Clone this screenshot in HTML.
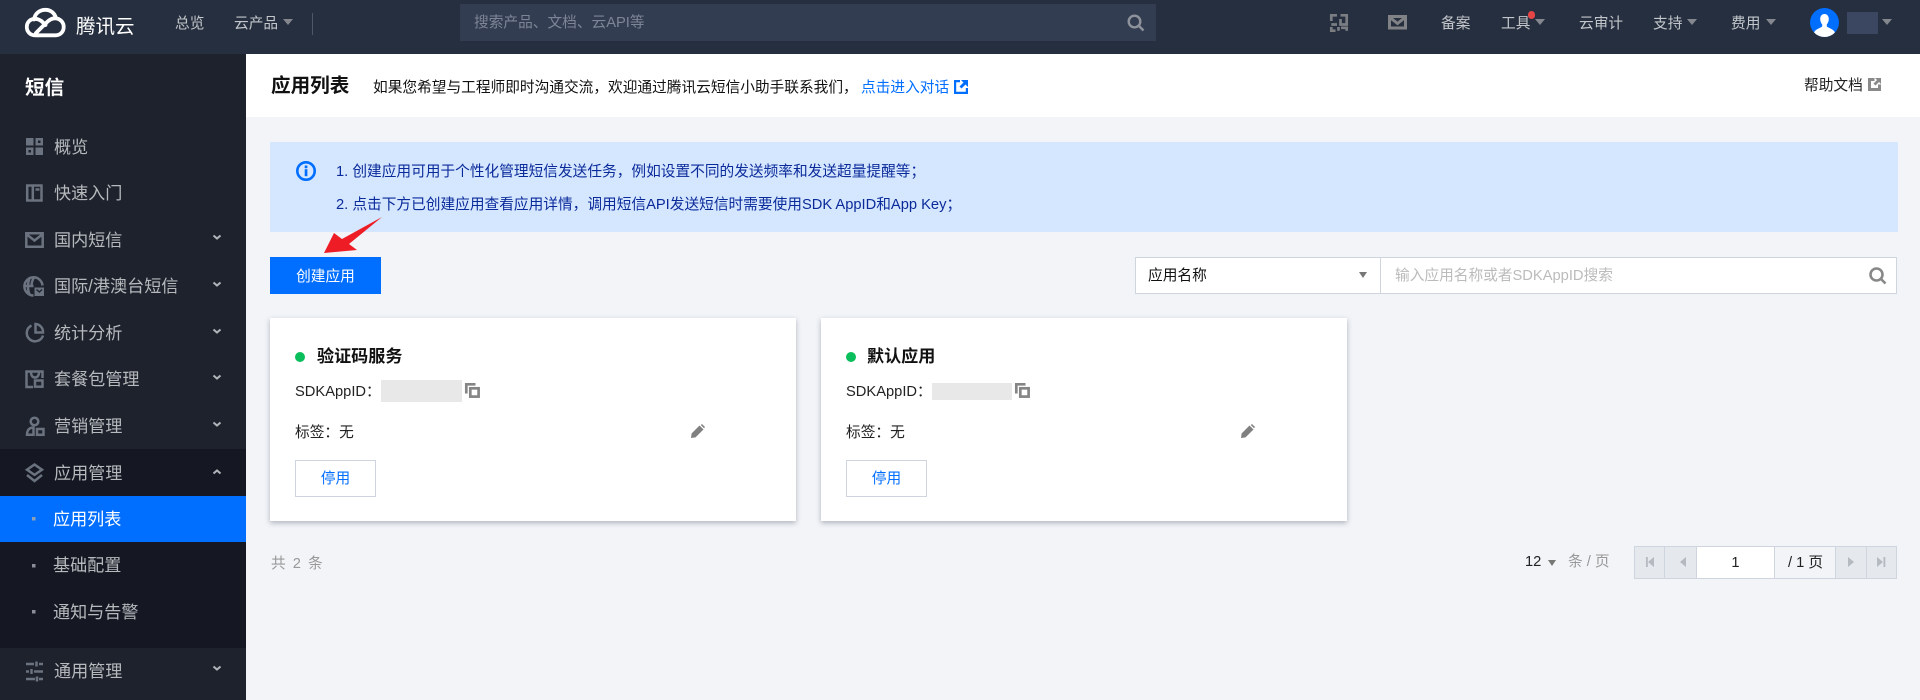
<!DOCTYPE html>
<html lang="zh"><head><meta charset="utf-8"><title>应用列表</title>
<style>
*{box-sizing:border-box}
html,body{margin:0;padding:0;width:1920px;height:700px;overflow:hidden;background:#f2f4f8;font-family:"Liberation Sans","Noto Sans CJK SC",sans-serif;font-size:14.7px;color:#000}
.a{position:absolute}
.t{position:absolute;white-space:nowrap;line-height:20px;height:20px}
.n{color:#c3c7cb}
.s{color:#b6babd;font-size:17.1px;line-height:24px;height:24px}
.tri{position:absolute;width:0;height:0;border-left:5px solid transparent;border-right:5px solid transparent;border-top:6.5px solid #84878d}
svg{position:absolute;overflow:visible}
.ic{fill:none;stroke:#6a737f;stroke-width:2.5}
.card{position:absolute;top:318px;width:526px;height:203px;background:#fff;box-shadow:0 2px 5px rgba(54,58,80,.35)}
.pb{position:absolute;top:546px;height:32.5px;background:#e5e8ed;border:1.5px solid #cfd5de}
</style></head><body>

<!-- top bar -->
<div class="a" style="left:0;top:0;width:1920px;height:54px;background:#262f3f"></div>
<svg style="left:0;top:0" width="80" height="54" fill="none" stroke="#fff" stroke-width="3.8" stroke-linecap="round" stroke-linejoin="round">
<path d="M34 19.500C35 13 40 9.800 45.500 9.800C50.500 9.800 54.500 13 56 18"/>
<path d="M38 35.300H55.500C60.500 35.300 63.700 31.500 63.700 27C63.700 22 59.800 18.300 55 18.300C51 18.300 48.500 20.500 46 23L36 33"/>
<path d="M38 35.300H35C30 35.300 26.800 31.500 26.800 27C26.800 22 30.500 18.800 35 18.800C38.500 18.800 41 20.500 43 22.500L45.500 25"/>
</svg>
<div class="t" style="left:76px;top:17px;font-size:19.5px;color:#fff">腾讯云</div>
<div class="t n" style="left:175px;top:14px">总览</div>
<div class="t n" style="left:234px;top:14px">云产品</div>
<div class="tri" style="left:283px;top:19px"></div>
<div class="a" style="left:312px;top:13px;width:1px;height:22px;background:#4f5766"></div>
<div class="a" style="left:460px;top:4px;width:696px;height:37px;background:#323d52"></div>
<div class="t" style="left:474px;top:13px;color:#7d8696">搜索产品、文档、云API等</div>
<svg style="left:1127px;top:14px" width="18" height="18" fill="none" stroke="#8d929b" stroke-width="2.4"><circle cx="7.500" cy="7.500" r="5.800"/><path d="M12 12l4.500 4.500"/></svg>

<svg style="left:1330px;top:14px" width="18" height="18" fill="none" stroke="#7a7d82" stroke-width="2.7"><path d="M7 1.300H1.300V7M10.500 1.300H16.700V10.500H10.500V5M1.300 10.500H7M1.300 13V16.700H5.500M8.500 13V16.700M11 13.800H16.700V16.700"/></svg>
<svg style="left:1388px;top:15px" width="20" height="15" fill="none" stroke="#808286" stroke-width="3"><rect x="1.500" y="1.500" width="16" height="11.500"/><path d="M2 2.500l7.500 6 7.500-6"/></svg>
<div class="t n" style="left:1441px;top:14px">备案</div>
<div class="t n" style="left:1501px;top:14px">工具</div>
<div class="a" style="left:1528px;top:11px;width:7px;height:8px;border-radius:4px;background:#e54545"></div>
<div class="tri" style="left:1535px;top:19px"></div>
<div class="t n" style="left:1579px;top:14px">云审计</div>
<div class="t n" style="left:1653px;top:14px">支持</div>
<div class="tri" style="left:1687px;top:19px"></div>
<div class="t n" style="left:1731px;top:14px">费用</div>
<div class="tri" style="left:1766px;top:19px"></div>
<svg style="left:1810px;top:8px" width="30" height="30"><clipPath id="av"><circle cx="14.500" cy="14.500" r="14.500"/></clipPath><circle cx="14.500" cy="14.500" r="14.500" fill="#006eff"/><path clip-path="url(#av)" d="M14.500 6c2.800 0 4.300 2.300 4.300 5 0 2.300-.9 4.200-2 5.400v2c1 1.500 6 2.300 8 5.600L24 30H5l-.8-6c2-3.300 7-4.100 8-5.600v-2c-1.100-1.200-2-3.100-2-5.400 0-2.700 1.500-5 4.300-5z" fill="#fff"/></svg>
<div class="a" style="left:1847px;top:12px;width:31px;height:22px;background:#3b4761"></div>
<div class="tri" style="left:1882px;top:19px"></div>

<!-- sidebar -->
<div class="a" style="left:0;top:54px;width:246px;height:646px;background:#1e222d"></div>
<div class="a" style="left:0;top:449px;width:246px;height:199px;background:#151823"></div>
<div class="a" style="left:0;top:496px;width:246px;height:46px;background:#006eff"></div>
<div class="t" style="left:25px;top:76px;font-size:19.6px;line-height:24px;height:24px;color:#fff;font-weight:bold">短信</div>

<div class="t s" style="left:54px;top:136px">概览</div>
<div class="t s" style="left:54px;top:182px">快速入门</div>
<div class="t s" style="left:54px;top:229px">国内短信</div>
<div class="t s" style="left:54px;top:275px">国际/港澳台短信</div>
<div class="t s" style="left:54px;top:322px">统计分析</div>
<div class="t s" style="left:54px;top:368px">套餐包管理</div>
<div class="t s" style="left:54px;top:415px">营销管理</div>
<div class="t s" style="left:54px;top:462px">应用管理</div>
<div class="t s" style="left:53px;top:508px;color:#fff">应用列表</div>
<div class="t s" style="left:53px;top:554px">基础配置</div>
<div class="t s" style="left:53px;top:601px">通知与告警</div>
<div class="t s" style="left:54px;top:660px">通用管理</div>

<!-- sidebar icons -->
<svg style="left:0;top:0" width="246" height="700">
<g fill="#6a737f"><rect x="26" y="138" width="7.500" height="7.500"/><rect x="35.500" y="138" width="7.500" height="7.500"/><rect x="26" y="147.500" width="7.500" height="7.500"/><rect x="35.500" y="147.500" width="7.500" height="7.500"/></g>
<rect x="38" y="140.500" width="2.500" height="2.500" fill="#1e222d"/><rect x="28.500" y="150" width="2.500" height="2.500" fill="#1e222d"/>
<g class="ic">
<path d="M27.200 185.500h14.300v15H27.200zM32.800 185.500v15M35.500 189.500h4"/>
<path d="M26.300 233.300h16.400v13.400H26.300zM26.800 234.500l7.700 6 7.700-6"/>
<path d="M33.500 295.500a9 9 0 0 1 0-18.200 9 9 0 0 1 9 8.200M29.500 279c-2 4-2 11 0 15M34 277.500c-2.500 4-2.500 8-2.500 8.500M25.500 286h8"/>
<path d="M31.500 325.500a8.300 8.300 0 1 0 11.500 10"/><path d="M35.500 324a8 8 0 0 1 7.500 8.500h-7.500z"/>
<path d="M33 387H26.500V371.500H42.500V378M31 372c0 4 2 5.500 4 5.500s4-1.500 4-5.500"/><rect x="35" y="380.500" width="7.500" height="6.200"/>
<circle cx="34.500" cy="421.500" r="3.800"/><path d="M33.500 427.500c-4 0-6.500 2.500-6.500 7.300h6.500z"/><rect x="37" y="429" width="6.500" height="5.800"/>
<path d="M34.500 464.500l7.500 5.200-7.500 5.200-7.500-5.200zM27 475l7.500 6 7.500-6"/>
<path d="M26 664h8M39 664h4M26 671.500h3M34 671.500h9M26 679h9M39 679h4"/><path d="M36.500 661.500v5M31.500 669v5M37 676.500v5"/>
</g>
<path d="M34.500 287.500h9.500v8.500h-9.500z" fill="#6a737f"/><path d="M36.500 289.500l2.800 2.500 2.800-2.500" fill="none" stroke="#1e222d" stroke-width="1.300"/>
<g><rect x="32" y="517" width="3.500" height="3.500" fill="#8da0b8"/><rect x="32" y="564" width="3.500" height="3.500" fill="#8a8e96"/><rect x="32" y="610" width="3.500" height="3.500" fill="#8a8e96"/></g>
<g fill="none" stroke="#b0b4b9" stroke-width="2">
<path d="M213.500 235.500l3.500 3 3.500-3M213.500 282.500l3.500 3 3.500-3M213.500 329.500l3.500 3 3.500-3M213.500 375.500l3.500 3 3.500-3M213.500 422.500l3.500 3 3.500-3M213.500 666.500l3.500 3 3.500-3"/>
<path d="M213.500 473.500l3.500-3 3.500 3"/>
</g>
</svg>

<!-- page header -->
<div class="a" style="left:246px;top:54px;width:1674px;height:63px;background:#fff"></div>
<div class="t" style="left:271px;top:74px;font-size:19.6px;line-height:24px;height:24px;font-weight:bold;color:#111">应用列表</div>
<div class="t" style="left:373px;top:78px;color:#111">如果您希望与工程师即时沟通交流，欢迎通过腾讯云短信小助手联系我们，</div>
<div class="t" style="left:861px;top:78px;color:#006eff">点击进入对话</div>
<svg style="left:954px;top:80px" width="14" height="14"><path d="M0 0h6v2.200H2.200v9.600h9.600V8H14v6H0z" fill="#006eff"/><path d="M7 0h7v7l-2.500-2.500-4 4-2-2 4-4z" fill="#006eff"/></svg>
<div class="t" style="left:1804px;top:76px;color:#222">帮助文档</div>
<svg style="left:1868px;top:78px" width="13" height="13"><path d="M0 0h6.500v3H3v7h7V6.500h3V13H0z" fill="#8a8a8a"/><path d="M7 0h6v6l-2-2-3.500 3.500-2-2L9 2z" fill="#8a8a8a"/></svg>

<!-- alert -->
<div class="a" style="left:270px;top:142px;width:1628px;height:90px;background:#d5e7ff"></div>
<svg style="left:296px;top:161px" width="20" height="20" fill="none"><circle cx="10" cy="10" r="8.700" stroke="#006eff" stroke-width="2.600"/><rect x="8.700" y="4.500" width="2.700" height="2.700" fill="#006eff"/><rect x="8.700" y="8.200" width="2.700" height="7" fill="#006eff"/></svg>
<div class="t" style="left:336px;top:162px;color:#0a2a9a">1. 创建应用可用于个性化管理短信发送任务，例如设置不同的发送频率和发送超量提醒等；</div>
<div class="t" style="left:336px;top:195px;color:#0a2a9a">2. 点击下方已创建应用查看应用详情，调用短信API发送短信时需要使用SDK AppID和App Key；</div>
<svg style="left:0;top:0" width="420" height="270"><path d="M382 217L349 244L357 250L324 253L334 233L342 239Z" fill="#ee1c25"/></svg>

<!-- toolbar -->
<div class="a" style="left:270px;top:257px;width:111px;height:37px;background:#006eff"></div>
<div class="t" style="left:270px;top:267px;width:111px;text-align:center;color:#fff">创建应用</div>
<div class="a" style="left:1135px;top:257px;width:246px;height:37px;background:#fff;border:1.500px solid #cfd5de"></div>
<div class="t" style="left:1148px;top:266px;color:#111">应用名称</div>
<div class="tri" style="left:1359px;top:272px;border-left-width:4.500px;border-right-width:4.500px;border-top-color:#777"></div>
<div class="a" style="left:1380px;top:257px;width:517px;height:37px;background:#fff;border:1.500px solid #cfd5de"></div>
<div class="t" style="left:1395px;top:266px;color:#bbb">输入应用名称或者SDKAppID搜索</div>
<svg style="left:1869px;top:267px" width="18" height="18" fill="none" stroke="#888" stroke-width="2.600"><circle cx="7.500" cy="7.500" r="6"/><path d="M12 12l4.500 4.500"/></svg>

<!-- cards -->
<div class="card" style="left:270px"></div>
<div class="card" style="left:821px"></div>

<div class="a" style="left:295px;top:352px;width:10px;height:10px;border-radius:50%;background:#0abf5b"></div>
<div class="t" style="left:317px;top:345px;font-size:17.1px;line-height:24px;height:24px;font-weight:bold;color:#111">验证码服务</div>
<div class="t" style="left:295px;top:382px;color:#222">SDKAppID：</div>
<div class="a" style="left:381px;top:380px;width:81px;height:22px;background:#e8e8e8"></div>
<svg style="left:465px;top:383px" width="15" height="15" fill="none" stroke="#858585" stroke-width="2.700"><rect x="5.300" y="5.300" width="8.300" height="8.300"/><path d="M1.300 10.500V1.300h9.200"/></svg>
<div class="t" style="left:295px;top:423px;color:#222">标签：无</div>
<svg style="left:691px;top:424px" width="14" height="14"><path d="M0 14l.6-4.500L8.500 1.500l4 4L4.500 13.400zM9.800 1L11 0l3 3-1 1.200z" fill="#808080"/></svg>
<div class="a" style="left:295px;top:460px;width:81px;height:37px;border:1.500px solid #cfd5de"></div>
<div class="t" style="left:295px;top:469px;width:81px;text-align:center;color:#006eff">停用</div>

<div class="a" style="left:846px;top:352px;width:10px;height:10px;border-radius:50%;background:#0abf5b"></div>
<div class="t" style="left:867px;top:345px;font-size:17.1px;line-height:24px;height:24px;font-weight:bold;color:#111">默认应用</div>
<div class="t" style="left:846px;top:382px;color:#222">SDKAppID：</div>
<div class="a" style="left:932px;top:383px;width:80px;height:17px;background:#e8e8e8"></div>
<svg style="left:1015px;top:383px" width="15" height="15" fill="none" stroke="#858585" stroke-width="2.700"><rect x="5.300" y="5.300" width="8.300" height="8.300"/><path d="M1.300 10.500V1.300h9.200"/></svg>
<div class="t" style="left:846px;top:423px;color:#222">标签：无</div>
<svg style="left:1241px;top:424px" width="14" height="14"><path d="M0 14l.6-4.500L8.500 1.500l4 4L4.500 13.400zM9.800 1L11 0l3 3-1 1.200z" fill="#808080"/></svg>
<div class="a" style="left:846px;top:460px;width:81px;height:37px;border:1.500px solid #cfd5de"></div>
<div class="t" style="left:846px;top:469px;width:81px;text-align:center;color:#006eff">停用</div>

<!-- footer -->
<div class="t" style="left:271px;top:554px;color:#999;letter-spacing:1.500px">共 2 条</div>
<div class="t" style="left:1525px;top:552px;color:#222">12</div>
<div class="tri" style="left:1548px;top:560px;border-left-width:4.500px;border-right-width:4.500px;border-top-color:#777"></div>
<div class="t" style="left:1568px;top:552px;color:#999">条 / 页</div>
<div class="pb" style="left:1634px;width:31px"></div>
<div class="pb" style="left:1664px;width:33px"></div>
<div class="pb" style="left:1696px;width:79px;background:#fff"></div>
<div class="pb" style="left:1774px;width:62px;background:#f2f4f8"></div>
<div class="pb" style="left:1835px;width:32px"></div>
<div class="pb" style="left:1866px;width:31px"></div>
<div class="t" style="left:1696px;top:553px;width:79px;text-align:center;color:#222">1</div>
<div class="t" style="left:1788px;top:553px;color:#222">/ 1 页</div>
<svg style="left:0;top:0" width="1920" height="700"><g fill="#b5b9c0"><path d="M1646 557h1.800v10H1646zM1654 557v10l-6-5z"/><path d="M1686 557v10l-6-5z"/><path d="M1848 557v10l6-5z"/><path d="M1877 557v10l6-5zM1883.500 557h1.800v10h-1.800z"/></g></svg>
</body></html>
